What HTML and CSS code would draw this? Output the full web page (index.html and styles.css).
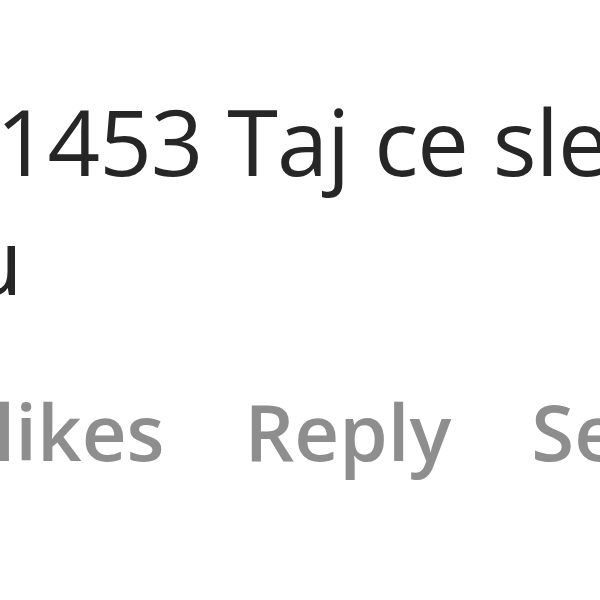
FILE: index.html
```html
<!DOCTYPE html>
<html lang="en">
<head>
  <meta charset="UTF-8">
  <meta name="viewport" content="width=device-width, initial-scale=1.0">
  <title>Comment</title>
  <link rel="stylesheet" href="styles.css">
</head>
<body>
  <div class="comment">
    <!-- Comment text, cropped on both sides -->
    <div class="comment-text">
      <div class="line line-first">1453 Taj ce sledeće godine</div>
      <div class="line line-second">godinu</div>
    </div>

    <!-- Action row -->
    <div class="comment-actions">
      <span class="action action-likes">12 likes</span>
      <span class="action">Reply</span>
      <span class="action">See translation</span>
    </div>
  </div>
</body>
</html>
```

FILE: styles.css
```css
/* General Styles */
html, body {
  margin: 0;
  padding: 0;
  background-color: #ffffff;
  overflow: hidden;
}

body {
  width: 600px;
  height: 600px;
  font-family: 'Open Sans', 'Noto Sans', sans-serif;
}

.comment {
  padding-top: 81px;
}

/* Comment Text */
.comment-text {
  font-size: 92px;
  line-height: 119px;
  color: #262626;
}

.line {
  white-space: nowrap;
}

.line-first {
  margin-left: -4px;
  letter-spacing: -1px;
  word-spacing: 2px;
}

.line-second {
  direction: rtl;
  text-align: left;
  width: 23px;
}

/* Actions */
.comment-actions {
  display: flex;
  gap: 80px;
  margin-top: 62px;
  font-size: 78px;
  line-height: 100px;
  font-weight: 600;
  color: #8e8e8e;
  white-space: nowrap;
}

.action-likes {
  margin-left: -116px;
}
```
